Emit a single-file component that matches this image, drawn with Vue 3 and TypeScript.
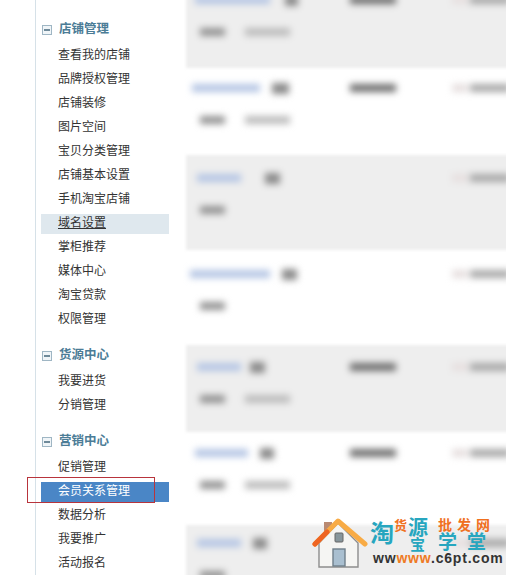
<script setup lang="ts">
interface Section { title: string; items: string[] }
interface Row { height: number; pad: number; tint: boolean; link: number; gap: number; badge: number; mid: boolean; sub: boolean; first: number }

const sections: Section[] = [
  { title: '店铺管理', items: ['查看我的店铺', '品牌授权管理', '店铺装修', '图片空间', '宝贝分类管理', '店铺基本设置', '手机淘宝店铺', '域名设置', '掌柜推荐', '媒体中心', '淘宝贷款', '权限管理'] },
  { title: '货源中心', items: ['我要进货', '分销管理'] },
  { title: '营销中心', items: ['促销管理', '会员关系管理', '数据分析', '我要推广', '活动报名'] },
]

const rows: Row[] = [
  { height: 88, pad: 13, tint: true, link: 75, gap: 15, badge: 13, mid: true, sub: true, first: 5 },
  { height: 87, pad: 13, tint: false, link: 68, gap: 12, badge: 17, mid: true, sub: true, first: 2 },
  { height: 95, pad: 16, tint: true, link: 44, gap: 24, badge: 15, mid: false, sub: false, first: 7 },
  { height: 95, pad: 17, tint: false, link: 80, gap: 12, badge: 15, mid: false, sub: false, first: 0 },
  { height: 87, pad: 15, tint: true, link: 44, gap: 9, badge: 15, mid: true, sub: true, first: 7 },
  { height: 93, pad: 14, tint: false, link: 53, gap: 12, badge: 14, mid: true, sub: true, first: 5 },
  { height: 60, pad: 11, tint: true, link: 44, gap: 12, badge: 14, mid: false, sub: false, first: 7 },
]
</script>

<template>
  <div class="page">
    <aside class="sidebar">
      <section v-for="section in sections" :key="section.title" class="group">
        <h3 class="group-head">
          <span class="toggle"></span>
          <span>{{ section.title }}</span>
        </h3>
        <ul class="menu">
          <li v-for="item in section.items" :key="item" class="menu-row">
            <a
              class="menu-link"
              :class="{ hover: item === '域名设置', active: item === '会员关系管理' }"
            >{{ item }}</a>
          </li>
        </ul>
      </section>
    </aside>

    <main class="content">
      <div
        v-for="(row, i) in rows"
        :key="i"
        class="row"
        :class="{ tinted: row.tint, firstrow: i === 0 }"
        :style="{ height: row.height + 'px', paddingTop: row.pad + 'px' }"
      >
        <div class="line">
          <span class="col-name" :style="{ paddingLeft: row.first + 'px' }">
            <i class="blur link" :style="{ width: row.link + 'px' }"></i>
            <i class="blur badge" :style="{ width: row.badge + 'px', marginLeft: row.gap + 'px' }"></i>
          </span>
          <span class="col-mid"><i v-if="row.mid" class="blur mid"></i></span>
          <span class="col-end"><i class="blur soft"></i><i class="blur end"></i></span>
        </div>
        <div class="line second">
          <i class="blur tag"></i>
          <i v-if="row.sub" class="blur subtext"></i>
        </div>
      </div>
    </main>

    <div class="annotation"></div>

    <div class="logo">
      <svg class="house" width="56" height="51" viewBox="0 0 56 51">
        <rect x="12" y="5" width="8" height="13" fill="#b98a72" />
        <path d="M7 26 V50 H46 V26 L26 6 Z" fill="#f5f5f3" stroke="#8d8d8d" stroke-width="1.4" />
        <path d="M3 27 L26 4 L53 27" fill="none" stroke="#f8ab45" stroke-width="5" stroke-linejoin="round" stroke-linecap="round" />
        <path d="M3 27 L15 15" fill="none" stroke="#ee6422" stroke-width="5" stroke-linecap="round" />
        <rect x="23" y="16" width="8" height="9" rx="1" fill="#87969c" stroke="#666" />
        <rect x="21" y="32" width="12" height="17" fill="#a9bfd0" stroke="#6f7f8a" stroke-width="1.4" />
      </svg>
      <div class="wordmark">
        <span class="mark tao">淘</span>
        <span class="mark huo">货</span>
        <span class="mark yuan">源</span>
        <span class="mark pifa">批发网</span>
        <span class="mark bao">宝</span>
        <span class="mark xue">学堂</span>
        <span class="mark url">ww<b class="orange">www</b>.c6pt.com</span>
      </div>
    </div>
  </div>
</template>

<style>
html, body { margin: 0; background: #fff; }
</style>

<style scoped>
.page {
  position: relative;
  display: flex;
  width: 506px;
  height: 575px;
  overflow: hidden;
  background: #fff;
  font-family: "Noto Sans CJK SC", "Liberation Sans", sans-serif;
}
.sidebar {
  flex: none;
  width: 128px;
  margin-left: 35px;
  padding: 18px 15px 0 5px;
  border-left: 1px solid #d6e1e8;
}
.group { margin-bottom: 14px; }
.group-head {
  display: flex;
  align-items: center;
  height: 20px;
  margin: 0 0 4px;
  color: #4b7c96;
  font-size: 12.5px;
  font-weight: 700;
  line-height: 20px;
}
.toggle {
  position: relative;
  box-sizing: border-box;
  width: 10px;
  height: 10px;
  margin: 3px 7px 0 1px;
  border: 1px solid #9fb6c4;
  background: #f0f5f8;
}
.toggle::after {
  content: "";
  position: absolute;
  left: 1px;
  right: 1px;
  top: 3px;
  height: 2px;
  background: #6f8a9a;
}
.menu { margin: 0; padding: 0; list-style: none; }
.menu-row { height: 24px; padding-top: 4px; box-sizing: border-box; }
.menu-link {
  display: block;
  height: 20px;
  padding-left: 17px;
  color: #333;
  font-size: 12px;
  line-height: 16px;
}
.menu-link.hover { background: #dfe8ee; text-decoration: underline; }
.menu-link.active { background: #4a86c6; color: #fff; }

.content {
  flex: none;
  width: 340px;
  margin-left: 2px;
  filter: blur(1.5px);
}
.row {
  padding-left: 4px;
  box-sizing: border-box;
}
.firstrow { margin-top: -20px; }
.tinted { background: #eeeeee; }
.line { display: flex; align-items: center; height: 14px; }
.second { margin-top: 18px; padding-left: 10px; }
.col-name { display: flex; align-items: center; flex: none; box-sizing: border-box; width: 160px; }
.col-mid { flex: none; width: 102px; }
.col-end { display: flex; align-items: center; }
.blur { display: block; flex: none; height: 8px; filter: blur(3px); }
.link { background: #b4c5e4; }
.badge { height: 11px; background: #8a8a8a; }
.mid { width: 46px; background: #6e6e6e; }
.soft { width: 16px; background: #e6dfdf; }
.end { width: 40px; margin-left: 2px; background: #a8a8a8; }
.tag { width: 25px; background: #929292; }
.subtext { width: 45px; margin-left: 20px; background: #bcbcbc; }

.annotation {
  position: absolute;
  left: 27px;
  top: 477px;
  width: 128px;
  height: 26px;
  border: 1px solid #b8343c;
  box-sizing: border-box;
}
.logo {
  position: absolute;
  left: 312px;
  top: 517px;
  display: flex;
  align-items: flex-start;
}
.wordmark { position: relative; width: 132px; height: 56px; margin-left: 2px; }
.mark { position: absolute; font-weight: 700; white-space: nowrap; }
.tao { left: 0; top: 3px; color: #27a6bf; font-size: 24px; line-height: 24px; }
.huo { left: 24px; top: 1px; color: #f0701f; font-size: 13px; line-height: 13px; }
.yuan { left: 38px; top: 0; color: #27a6bf; font-size: 20px; line-height: 20px; }
.pifa { left: 68px; top: 0; color: #f0701f; font-size: 14px; line-height: 14px; letter-spacing: 5px; }
.bao { left: 40px; top: 19px; color: #27a6bf; font-size: 15px; line-height: 15px; }
.xue { left: 68px; top: 14px; color: #27a6bf; font-size: 19px; line-height: 19px; letter-spacing: 10px; }
.url {
  left: 3px;
  top: 34px;
  color: #333;
  font-family: "Liberation Sans", sans-serif;
  font-size: 14px;
  line-height: 15px;
  letter-spacing: 0.8px;
}
.orange { color: #ee7a24; font-weight: 700; }
</style>
